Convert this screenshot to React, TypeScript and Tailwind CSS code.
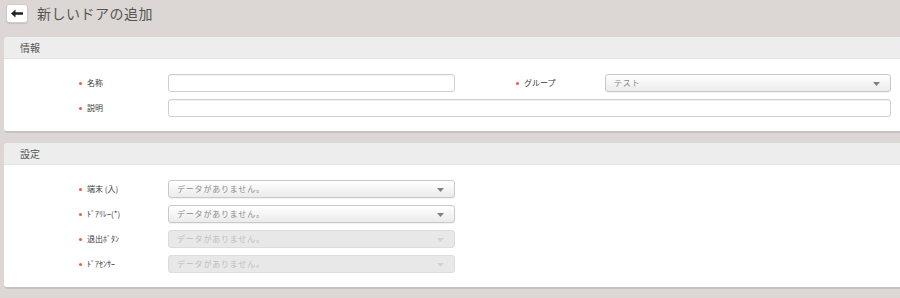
import React from "react";

const font = { fontFamily: '"Noto Sans CJK JP", "Noto Sans", sans-serif' };

function Label({ text }: { text: string }) {
  return (
    <div className="flex items-center w-[89px] shrink-0 text-[8px] text-[#3a3a3a]">
      <span className="w-[3px] h-[3px] bg-[#f05a4a] rounded-full mr-[5px]" />
      <span>{text}</span>
    </div>
  );
}

function Arrow({ disabled }: { disabled?: boolean }) {
  return (
    <svg width="7" height="4" viewBox="0 0 7 4" className="absolute right-[10px] top-[7px]">
      <path d="M0 0 L7 0 L3.5 4 Z" fill={disabled ? "#d2d2d2" : "#808080"} />
    </svg>
  );
}

function Select({ text, width, disabled }: { text: string; width: string; disabled?: boolean }) {
  return (
    <div
      className={
        "relative h-[18px] rounded-[3px] border flex items-center pl-[8px] text-[8px] " +
        width +
        (disabled
          ? " bg-[#e8e8e8] border-[#dcdcdc] text-[#bdbdbd]"
          : " bg-gradient-to-b from-[#ffffff] to-[#ebebeb] border-[#c9c9c9] text-[#8a8a8a] shadow-[0_1px_1px_rgba(0,0,0,0.06)]")
      }
    >
      <span className="tracking-[0.8px]">{text}</span>
      <Arrow disabled={disabled} />
    </div>
  );
}

function Input({ width }: { width: string }) {
  return <div className={"h-[18px] rounded-[3px] border border-[#cfcfcf] bg-white shadow-[inset_0_1px_1px_rgba(0,0,0,0.05)] " + width} />;
}

function Panel({ title, children }: { title: string; children: React.ReactNode }) {
  return (
    <div className="ml-[4px] w-[900px] bg-white rounded-[4px] border-b-[2px] border-[#c7c2bf] overflow-hidden">
      <div className="h-[22px] bg-[#ededed] border-b border-[#e2e2e2] flex items-center pl-[16px] text-[10px] text-[#555]">
        {title}
      </div>
      {children}
    </div>
  );
}

export default function App() {
  const nd = "データがありません。";
  return (
    <div className="w-[900px] h-[298px] overflow-hidden bg-[#dcd7d4]" style={font}>
      <div className="h-[37px] flex items-start pt-[4px] pl-[6px]">
        <div className="w-[22px] h-[19px] bg-white border border-[#cfcac6] rounded-[3px] flex items-center justify-center shadow-[0_1px_1px_rgba(0,0,0,0.1)]">
          <svg width="12" height="9" viewBox="0 0 12 9">
            <path d="M0 4.5 L4.5 0.5 L4.5 3.2 L12 3.2 L12 5.8 L4.5 5.8 L4.5 8.5 Z" fill="#222" />
          </svg>
        </div>
        <div className="ml-[9px] mt-[1px] text-[14px] leading-[17px] tracking-[0.5px] text-[#555]">新しいドアの追加</div>
      </div>

      <div className="flex flex-col gap-[10px]">
        <Panel title="情報">
          <div className="pt-[15px] pb-[14px] pl-[75px] flex flex-col gap-[7px]">
            <div className="flex items-center">
              <Label text="名称" />
              <Input width="w-[287px]" />
              <div className="ml-[61px]">
                <Label text="グループ" />
              </div>
              <Select text="テスト" width="w-[286px]" />
            </div>
            <div className="flex items-center">
              <Label text="説明" />
              <Input width="w-[723px]" />
            </div>
          </div>
        </Panel>

        <Panel title="設定">
          <div className="pt-[15px] pb-[14px] pl-[75px] flex flex-col gap-[7px]">
            <div className="flex items-center">
              <Label text="端末 (入)" />
              <Select text={nd} width="w-[287px]" />
            </div>
            <div className="flex items-center">
              <Label text="ﾄﾞｱﾘﾚｰ(*)" />
              <Select text={nd} width="w-[287px]" />
            </div>
            <div className="flex items-center">
              <Label text="退出ﾎﾞﾀﾝ" />
              <Select text={nd} width="w-[287px]" disabled />
            </div>
            <div className="flex items-center">
              <Label text="ﾄﾞｱｾﾝｻｰ" />
              <Select text={nd} width="w-[287px]" disabled />
            </div>
          </div>
        </Panel>

        <Panel title="">
          <div className="h-[20px]" />
        </Panel>
      </div>
    </div>
  );
}
